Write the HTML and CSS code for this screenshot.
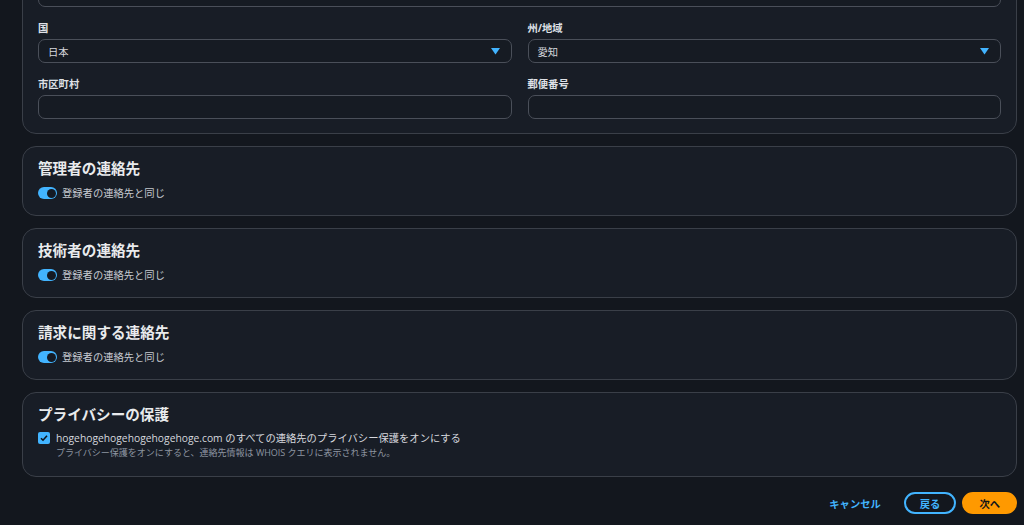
FILE: index.html
```html
<!DOCTYPE html>
<html lang="ja">
<head>
    <meta charset="UTF-8">
    <title>連絡先情報</title>
    <link rel="stylesheet" href="styles.css">
</head>
<body>
    <div class="page">
        <div class="card card-address">
            <div class="field wide">
                <input type="text" class="control">
            </div>
            <div class="field">
                <label>国</label>
                <div class="control select">
                    <span>日本</span>
                    <svg class="caret" width="9" height="7" viewBox="0 0 9 7"><path d="M0 0h9L4.5 6.5z" fill="#42b4ff"/></svg>
                </div>
            </div>
            <div class="field">
                <label>州/地域</label>
                <div class="control select">
                    <span>愛知</span>
                    <svg class="caret" width="9" height="7" viewBox="0 0 9 7"><path d="M0 0h9L4.5 6.5z" fill="#42b4ff"/></svg>
                </div>
            </div>
            <div class="field">
                <label>市区町村</label>
                <input type="text" class="control">
            </div>
            <div class="field">
                <label>郵便番号</label>
                <input type="text" class="control">
            </div>
        </div>

        <div class="card">
            <h2>管理者の連絡先</h2>
            <div class="toggle-row">
                <span class="toggle"><span class="knob"></span></span>
                <span>登録者の連絡先と同じ</span>
            </div>
        </div>

        <div class="card">
            <h2>技術者の連絡先</h2>
            <div class="toggle-row">
                <span class="toggle"><span class="knob"></span></span>
                <span>登録者の連絡先と同じ</span>
            </div>
        </div>

        <div class="card">
            <h2>請求に関する連絡先</h2>
            <div class="toggle-row">
                <span class="toggle"><span class="knob"></span></span>
                <span>登録者の連絡先と同じ</span>
            </div>
        </div>

        <div class="card">
            <h2>プライバシーの保護</h2>
            <div class="check-row">
                <svg class="checkbox" width="12" height="12" viewBox="0 0 12 12">
                    <rect width="12" height="12" rx="2" fill="#42b4ff"/>
                    <path d="M3 6.2l2 2 4-4.4" fill="none" stroke="#0f141a" stroke-width="1.6"/>
                </svg>
                <div>
                    <div class="check-label">hogehogehogehogehogehoge.com のすべての連絡先のプライバシー保護をオンにする</div>
                    <div class="check-desc">プライバシー保護をオンにすると、連絡先情報は WHOIS クエリに表示されません。</div>
                </div>
            </div>
        </div>

        <div class="actions">
            <a class="link">キャンセル</a>
            <button class="btn btn-normal">戻る</button>
            <button class="btn btn-primary">次へ</button>
        </div>
    </div>
</body>
</html>
```

FILE: styles.css
```css
body {
    margin: 0;
    background-color: #13171e;
    color: #c6c9d0;
    font-family: "Open Sans", "Noto Sans CJK JP", sans-serif;
    font-size: 10.3px;
    overflow: hidden;
}
.page {
    display: flex;
    flex-direction: column;
    gap: 12px;
    padding: 0 7px 0 22px;
}
.card {
    background-color: #181d26;
    border: 1px solid #3a3f48;
    border-radius: 14px;
    padding: 10px 15px 13px;
}
.card-address {
    margin-top: -32px;
    padding: 14px 15px 14px;
    display: grid;
    grid-template-columns: 1fr 1fr;
    column-gap: 16px;
    row-gap: 12px;
}
.field.wide {
    grid-column: span 2;
}
.field label {
    display: block;
    line-height: 18px;
    margin-bottom: 2px;
    font-weight: 700;
    color: #dfe1e6;
}
.control {
    display: flex;
    align-items: center;
    box-sizing: border-box;
    width: 100%;
    height: 24px;
    margin: 0;
    padding: 0 10px 0 9px;
    background-color: #161b23;
    border: 1px solid #4a4f59;
    border-radius: 7px;
    color: #d6d8de;
    font: inherit;
}
.select {
    justify-content: space-between;
}
.caret {
    margin-right: 1px;
}
h2 {
    margin: 0;
    font-size: 14.6px;
    line-height: 22px;
    font-weight: 700;
    color: #e9ebed;
}
.toggle-row {
    display: flex;
    align-items: center;
    gap: 5px;
    margin-top: 5px;
    line-height: 18px;
}
.toggle {
    display: flex;
    justify-content: flex-end;
    align-items: center;
    box-sizing: border-box;
    width: 19px;
    height: 12px;
    padding: 0 1.5px;
    background-color: #42b4ff;
    border-radius: 6px;
}
.knob {
    width: 9px;
    height: 9px;
    border-radius: 50%;
    background-color: #141a24;
}
.check-row {
    display: flex;
    align-items: flex-start;
    gap: 6px;
    margin-top: 5px;
}
.checkbox {
    margin-top: 2px;
    flex: none;
}
.check-label {
    line-height: 16px;
    color: #d6d8de;
}
.check-desc {
    line-height: 13px;
    font-size: 9px;
    color: #8d95a1;
    margin-bottom: 4px;
}
.actions {
    display: flex;
    justify-content: flex-end;
    align-items: center;
    gap: 6px;
    margin-top: 3px;
}
.link {
    color: #42b4ff;
    font-weight: 700;
    margin-right: 17px;
    cursor: pointer;
}
.btn {
    box-sizing: border-box;
    height: 22px;
    padding: 0 14px;
    border-radius: 11px;
    border: 2px solid #42b4ff;
    font: inherit;
    font-weight: 700;
    cursor: pointer;
}
.btn-normal {
    background-color: transparent;
    color: #42b4ff;
}
.btn-primary {
    background-color: #ff9900;
    border-color: #ff9900;
    color: #0f141a;
    padding: 0 15px;
}
```
